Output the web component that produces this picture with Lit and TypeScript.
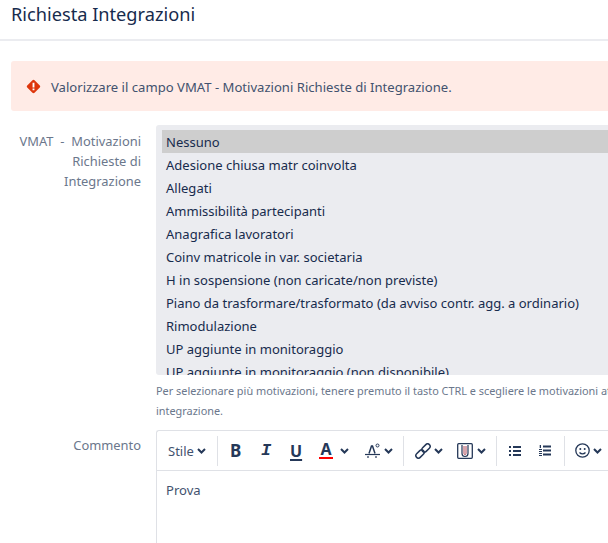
import { LitElement, html, css } from "lit";
import { customElement } from "lit/decorators.js";

const OPTIONS = [
  "Adesione chiusa matr coinvolta",
  "Allegati",
  "Ammissibilità partecipanti",
  "Anagrafica lavoratori",
  "Coinv matricole in var. societaria",
  "H in sospensione (non caricate/non previste)",
  "Piano da trasformare/trasformato (da avviso contr. agg. a ordinario)",
  "Rimodulazione",
  "UP aggiunte in monitoraggio",
  "UP aggiunte in monitoraggio (non disponibile)",
];

const chev = html`<svg class="chev" width="9" height="6" viewBox="0 0 9 6"><path d="M1 1 4.500 4.500 8 1" fill="none" stroke="#253858" stroke-width="2"/></svg>`;

@customElement("app-root")
export class AppRoot extends LitElement {
  static styles = css`
    :host { display: block; width: 608px; height: 543px; overflow: hidden; background: #fff; font-family: "Noto Sans", "Open Sans", sans-serif; color: #253858; font-size: 13px; }
    .head { height: 39px; border-bottom: 2px solid #ebecf0; padding-left: 11px; }
    h1 { margin: 0; font-weight: 400; font-size: 18.2px; line-height: 28px; color: #172b4d; }
    .alert { margin: 20px 0 14px 11px; width: 640px; height: 50px; box-sizing: border-box; background: #ffebe6; border-radius: 3px 0 0 3px; display: flex; align-items: center; padding: 1px 0 0 15px; gap: 10px; font-size: 13.1px; color: #42526e; }
    .alert-icon { flex: none; margin-top: -1px; }
    .row { display: grid; grid-template-columns: 141px 560px; column-gap: 15px; }
    .label { text-align: right; color: #6b778c; font-size: 12.9px; line-height: 20px; padding-top: 6px; }
    .label.short { padding-top: 5px; }
    .wide { word-spacing: 3.500px; }
    .list { height: 250px; box-sizing: border-box; background: #ebecf0; border-radius: 3px; padding: 5px 6px 0; overflow: hidden; font-size: 13.02px; color: #172b4d; }
    .opt { height: 23px; line-height: 25px; padding-left: 4px; white-space: nowrap; }
    .opt.sel { background: #cecece; }
    .hint { margin: 6px 0 0; width: 600px; font-size: 10.9px; line-height: 20px; color: #6b778c; }
    .row2 { margin-top: 9px; }
    .editor { width: 560px; height: 200px; box-sizing: border-box; border: 1px solid #dfe1e6; border-right: 0; border-bottom: 0; border-radius: 3px 0 0 0; }
    .bar { height: 39px; border-bottom: 1px solid #dfe1e6; display: flex; align-items: center; color: #253858; }
    .sep { width: 1px; height: 30px; background: #dfe1e6; flex: none; }
    .btn { display: flex; align-items: center; flex: none; height: 30px; box-sizing: border-box; }
    .stile { width: 60px; padding-left: 11px; gap: 3px; font-size: 13px; color: #42526e; }
    .bold { width: 36px; padding-left: 12px; }
    .ital { width: 24px; padding-left: 7px; }
    .under { width: 36px; padding-left: 12px; }
    .color { width: 51px; padding-left: 5px; gap: 7px; }
    .clear { width: 38px; padding-left: 0; gap: 4px; }
    .link { width: 53px; padding-left: 11px; gap: 3px; }
    .clip { width: 39px; padding-left: 0; gap: 4px; }
    .bul { width: 42px; padding-left: 12px; }
    .num { width: 25px; }
    .emoji { width: 44px; padding-left: 10px; gap: 3px; }
    .content { padding: 9px; font-size: 13.05px; line-height: 20px; color: #42526e; }
    .t { line-height: 1; display: block; text-align: center; color: #253858; }
    .tb { font-weight: 700; font-size: 17px; }
    .ti { font-style: italic; font-family: "Liberation Mono", monospace; font-weight: 700; font-size: 17px; }
    .tu { font-size: 16px; text-decoration: underline; text-decoration-thickness: 2px; text-underline-offset: 2px; font-weight: 700; }
    .ta { font-size: 16px; border-bottom: 2px solid #ff0000; font-weight: 700; line-height: 15px; width: 14px; }
    .chev { flex: none; }
  `;

  render() {
    return html`
      <div class="head"><h1>Richiesta Integrazioni</h1></div>
      <div class="alert">
        <svg class="alert-icon" width="15" height="15" viewBox="0 0 16 16"><path d="M8 .8c.4 0 .8.2 1.100.5l5.600 5.600c.6.6.6 1.600 0 2.200l-5.600 5.600c-.6.6-1.600.6-2.200 0L1.300 9.100c-.6-.6-.6-1.600 0-2.200L6.900 1.300C7.200 1 7.600.8 8 .8z" fill="#de350b"/><path d="M7 4h2v5H7zM7 10h2v2H7z" fill="#fff"/></svg>
        <span>Valorizzare il campo VMAT - Motivazioni Richieste di Integrazione.</span>
      </div>
      <div class="row">
        <div class="label"><span class="wide">VMAT - Motivazioni</span> Richieste di Integrazione</div>
        <div>
          <div class="list" role="listbox">
            <div class="opt sel">Nessuno</div>
            ${OPTIONS.map((o) => html`<div class="opt">${o}</div>`)}
          </div>
          <p class="hint">Per selezionare più motivazioni, tenere premuto il tasto CTRL e scegliere le motivazioni attinenti alla richiesta di integrazione.</p>
        </div>
      </div>
      <div class="row row2">
        <div class="label short">Commento</div>
        <div class="editor">
          <div class="bar">
            <div class="btn stile">Stile ${chev}</div>
            <div class="sep"></div>
            <div class="btn bold"><span class="t tb">B</span></div>
            <div class="btn ital"><span class="t ti">I</span></div>
            <div class="btn under"><span class="t tu">U</span></div>
            <div class="btn color"><span class="t ta">A</span>${chev}</div>
            <div class="btn clear">
              <svg width="15" height="16" viewBox="0 0 15 16" fill="none" stroke="#253858"><path d="M4 10.500 6.500 3h1l2.500 7.500" stroke-width="1.500"/><circle cx="12.500" cy="2.500" r="1.500" stroke-width="1"/><path d="M0 11.500h15" stroke-width="1.200"/><path d="M3 13v2M11 13v2" stroke-width="1.200"/></svg>
              ${chev}
            </div>
            <div class="sep"></div>
            <div class="btn link">
              <svg width="16" height="16" viewBox="0 0 16 16" fill="none" stroke="#253858" stroke-width="1.500"><g transform="rotate(-45 8 8)"><rect x="-1" y="5.500" width="9.500" height="5" rx="2.500"/><rect x="7.500" y="5.500" width="9.500" height="5" rx="2.500"/></g></svg>
              ${chev}
            </div>
            <div class="btn clip">
              <svg width="16" height="16" viewBox="0 0 16 16" fill="none"><rect x=".7" y=".7" width="14.600" height="14.600" rx="1" stroke="#253858" stroke-width="1.300"/><path d="M5 2v8.500a3 3 0 0 0 6 0V2" stroke="#253858" stroke-width="1.200"/><path d="M7 3v7.500a1 1 0 0 0 2 0V3" stroke="#b04a5a" stroke-width="1"/></svg>
              ${chev}
            </div>
            <div class="sep"></div>
            <div class="btn bul">
              <svg width="12" height="10" viewBox="0 0 12 10" fill="#253858"><rect y="0" width="2" height="2"/><rect y="4" width="2" height="2"/><rect y="8" width="2" height="2"/><rect x="4" y="0" width="8" height="2"/><rect x="4" y="4" width="8" height="2"/><rect x="4" y="8" width="8" height="2"/></svg>
            </div>
            <div class="btn num">
              <svg width="12" height="11" viewBox="0 0 12 11" fill="#253858"><rect x=".7" y="0" width="1.300" height="3"/><rect y="4" width="3" height="1"/><rect y="6" width="3" height="1"/><rect y="8" width="3" height="1"/><rect y="10" width="3" height="1"/><rect x="4" y="0.500" width="8" height="2"/><rect x="4" y="4.500" width="8" height="2"/><rect x="4" y="8.500" width="8" height="2"/></svg>
            </div>
            <div class="sep"></div>
            <div class="btn emoji">
              <svg width="15" height="15" viewBox="0 0 15 15" fill="none"><circle cx="7.500" cy="7.500" r="6.700" stroke="#253858" stroke-width="1.300"/><circle cx="5.300" cy="6" r="1" fill="#253858"/><circle cx="9.700" cy="6" r="1" fill="#253858"/><path d="M4.500 9.500c1.500 1.800 4.500 1.800 6 0" stroke="#253858" stroke-width="1.200"/></svg>
              ${chev}
            </div>
          </div>
          <div class="content">Prova</div>
        </div>
      </div>
    `;
  }
}
